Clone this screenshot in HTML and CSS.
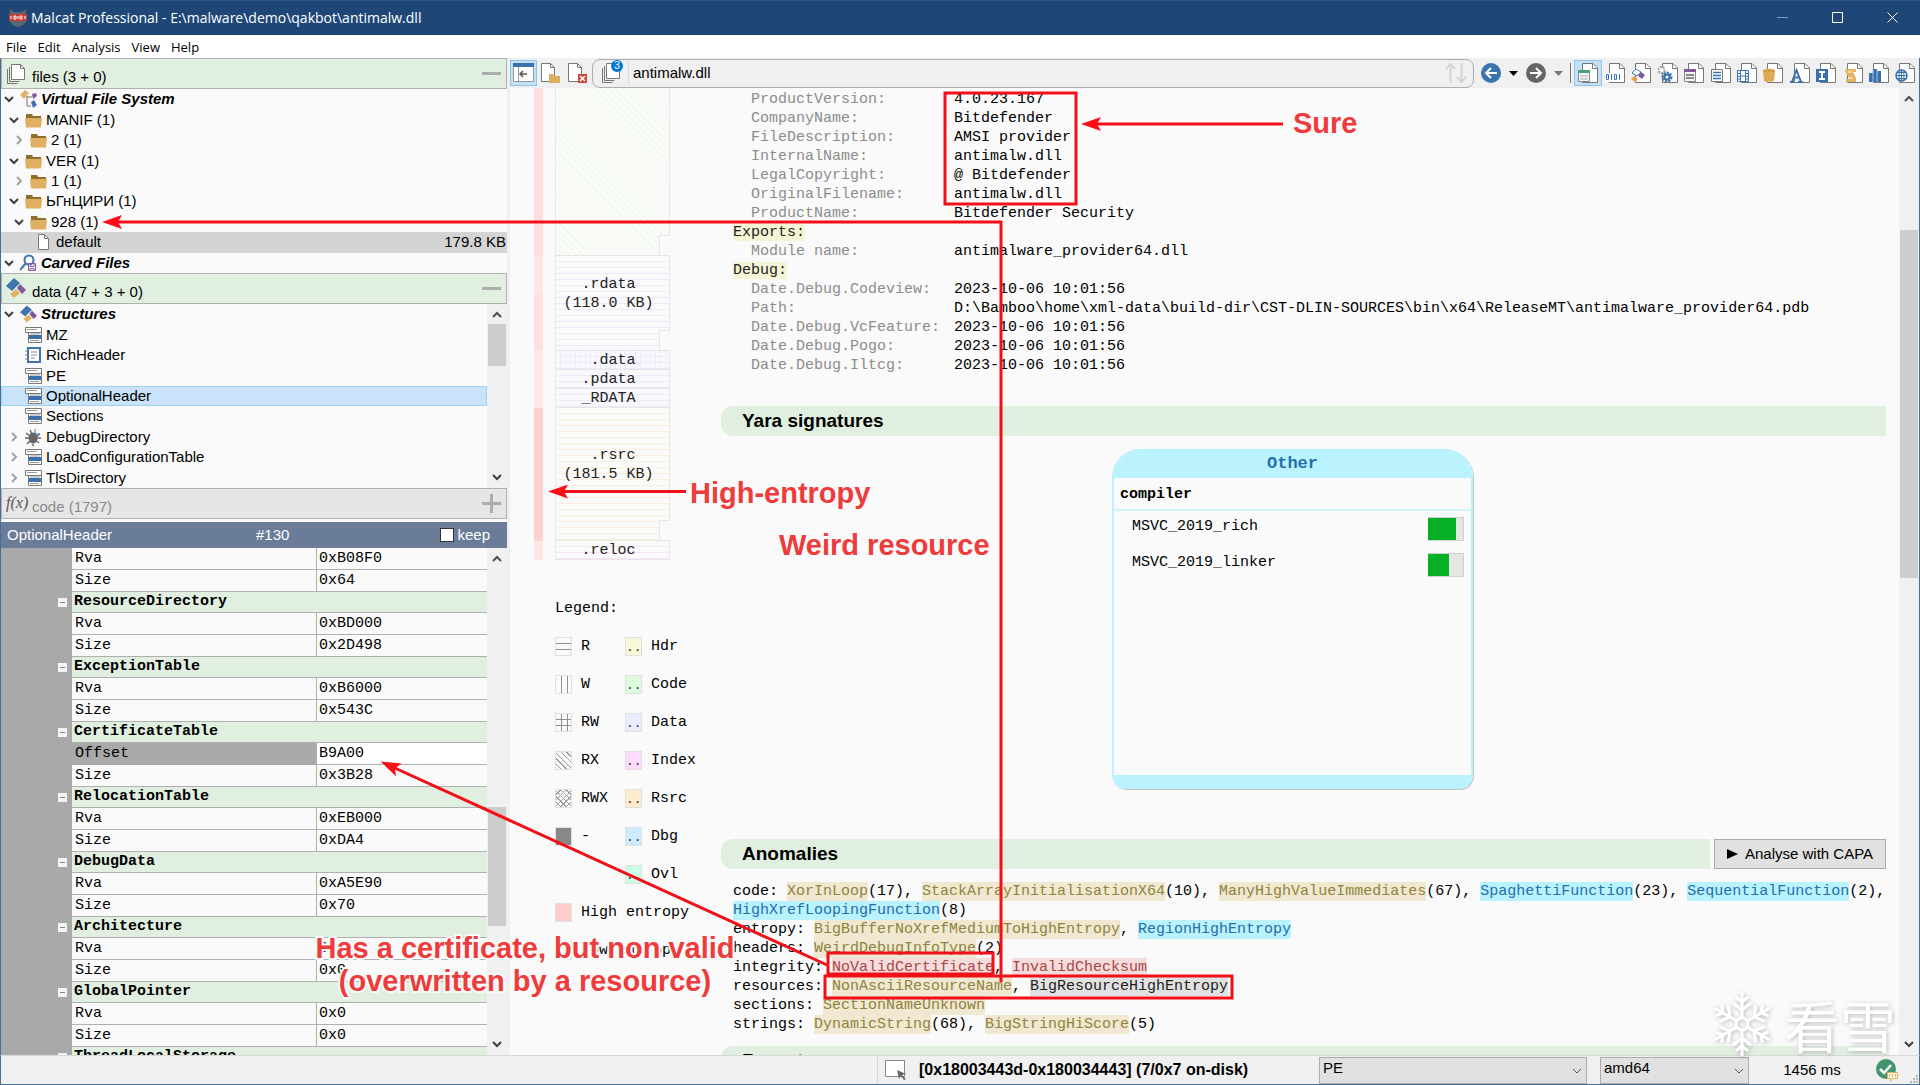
FILE: index.html
```html
<!DOCTYPE html>
<html lang="en">
<head>
  <meta charset="utf-8">
  <title>Malcat Professional - E:\malware\demo\qakbot\antimalw.dll</title>
  <link rel="stylesheet" href="styles.css">
</head>
<body>
  <!-- Shared icons -->
  <svg class="defs" aria-hidden="true">
    <symbol id="chev-down" viewBox="0 0 10 10"><path d="M1 3l4 4 4-4" fill="none" stroke="#404040" stroke-width="2"/></symbol>
    <symbol id="chev-right" viewBox="0 0 10 10"><path d="M3 1l4 4-4 4" fill="none" stroke="#a0a0a0" stroke-width="2"/></symbol>
    <symbol id="arrow-up" viewBox="0 0 10 10"><path d="M1 7l4-4 4 4" fill="none" stroke="#505050" stroke-width="2"/></symbol>
    <symbol id="folder" viewBox="0 0 17 16"><path d="M1 7V2h6l1 2h8v3z" fill="#8d6f2d"/><path d="M0 6h17l-1 9.500H1z" fill="#e0b062"/></symbol>
    <symbol id="page" viewBox="0 0 17 18"><path d="M3.500 1.500h6l4 4v11h-10z" fill="#fff" stroke="#777"/><path d="M9.500 1.500v4h4" fill="none" stroke="#777"/></symbol>
    <symbol id="pages" viewBox="0 0 20 22"><path d="M1.500 6v14.500h10M3.500 4v14.500h10" fill="none" stroke="#777"/><path d="M5.500 1.500h9l4 4v11h-13z" fill="#fff" stroke="#777"/><path d="M14.500 1.500v4h4" fill="none" stroke="#777"/></symbol>
    <symbol id="struct" viewBox="0 0 17 18"><path d="M.5 1.500h16v5H.5zM3.500 6.500h13v10h-13z" fill="#fff" stroke="#777"/><path d="M2 3.500h10M5 8h10M5 14.500h9" stroke="#999"/><path d="M4 9h12v4H4z" fill="#3a70ad"/></symbol>
    <symbol id="bricks" viewBox="0 0 20 20"><path d="M8 0l6 5-8 8-6-5z" fill="#3f74ae"/><path d="M14 6l6 6-4 4-5-6z" fill="#81589b"/><path d="M10 11l4 4-6 5-4-4z" fill="#e3b363"/></symbol>
    <symbol id="doc" viewBox="0 0 21 22"><path d="M4.500 1.500h10.500l4.500 4.500v14.500h-15z" fill="#fff" stroke="#777"/><path d="M14.500 1.500v5h5" fill="none" stroke="#777"/></symbol>
  </svg>

  <header class="titlebar">
    <svg class="logo" viewBox="0 0 18 18"><path d="M1 0l4 3h8l4-3v11c0 4-4 6-8 7-4-1-8-3-8-7z" fill="#5a6670"/><path d="M0 5h18v7H0z" fill="#c93a3a"/><path d="M2 7v3M5 7h2v3H5zM9 7v3M11 7h2v3h-2zM16 7v3" stroke="#fff" fill="none"/></svg>
    <h1>Malcat Professional - E:\malware\demo\qakbot\antimalw.dll</h1>
    <button aria-label="Minimize"><svg viewBox="0 0 11 11"><path d="M0 5.500h11" stroke="#7f9dbd"/></svg></button>
    <button aria-label="Maximize"><svg viewBox="0 0 11 11"><path d="M.5.5h10v10H.5z" stroke="#fff" fill="none"/></svg></button>
    <button aria-label="Close"><svg viewBox="0 0 11 11"><path d="M.5.5l10 10M10.500.5l-10 10" stroke="#fff"/></svg></button>
  </header>

  <nav class="menubar">
    <button>File</button><button>Edit</button><button>Analysis</button><button>View</button><button>Help</button>
  </nav>

  <div class="workspace">
    <aside class="sidebar">
      <h2 class="panel-title"><svg width="20" height="22"><use href="#pages"/></svg><span>files (3 + 0)</span><i class="collapse"></i></h2>
      <ul class="tree">
        <li class="root"><svg class="chev"><use href="#chev-down"/></svg><svg class="icon" viewBox="0 0 17 18"><path d="M5 0l4 3-5 6-4-4z" fill="#e3b363"/><path d="M7 6v10h4M7 7h5" stroke="#777" fill="none"/><path d="M12 4l4-1 1 3-4 3z" fill="#81589b"/><path d="M11 12l3-2 3 5-4 3z" fill="#3f74ae"/></svg>Virtual File System</li>
        <li class="l1"><svg class="chev"><use href="#chev-down"/></svg><svg class="icon"><use href="#folder"/></svg>MANIF (1)</li>
        <li class="l2"><svg class="chev"><use href="#chev-right"/></svg><svg class="icon"><use href="#folder"/></svg>2 (1)</li>
        <li class="l1"><svg class="chev"><use href="#chev-down"/></svg><svg class="icon"><use href="#folder"/></svg>VER (1)</li>
        <li class="l2"><svg class="chev"><use href="#chev-right"/></svg><svg class="icon"><use href="#folder"/></svg>1 (1)</li>
        <li class="l1"><svg class="chev"><use href="#chev-down"/></svg><svg class="icon"><use href="#folder"/></svg>ЬГнЦИРИ (1)</li>
        <li class="l2"><svg class="chev"><use href="#chev-down"/></svg><svg class="icon"><use href="#folder"/></svg>928 (1)</li>
        <li class="l3 current"><i class="chev"></i><svg class="icon"><use href="#page"/></svg>default<span class="size">179.8 KB</span></li>
        <li class="root"><svg class="chev"><use href="#chev-down"/></svg><svg class="icon" viewBox="0 0 17 18"><circle cx="9" cy="6" r="4.500" fill="#fff" stroke="#3f74ae" stroke-width="2"/><path d="M6 9l-6 7" stroke="#3f74ae" stroke-width="2"/><path d="M8.500 9.500h7v7h-7zM10 9.500v3h4v-3M10 16.500v-2h4v2" fill="#fff" stroke="#81589b"/></svg>Carved Files</li>
      </ul>

      <h2 class="panel-title"><svg width="20" height="20"><use href="#bricks"/></svg><span>data (47 + 3 + 0)</span><i class="collapse"></i></h2>
      <div class="scroll-area">
        <ul class="tree">
          <li class="root"><svg class="chev"><use href="#chev-down"/></svg><svg class="icon"><use href="#bricks"/></svg>Structures</li>
          <li class="l1"><i class="chev"></i><svg class="icon"><use href="#struct"/></svg>MZ</li>
          <li class="l1"><i class="chev"></i><svg class="icon" viewBox="0 0 17 18"><path d="M3 2h12v14H3z" fill="#fff" stroke="#3f74ae" stroke-width="2"/><path d="M6 6h6M6 9h6M6 12h4M0 5h3M0 9h3M0 13h3" stroke="#888"/></svg>RichHeader</li>
          <li class="l1"><i class="chev"></i><svg class="icon"><use href="#struct"/></svg>PE</li>
          <li class="l1 selected"><i class="chev"></i><svg class="icon"><use href="#struct"/></svg>OptionalHeader</li>
          <li class="l1"><i class="chev"></i><svg class="icon"><use href="#struct"/></svg>Sections</li>
          <li class="l1"><svg class="chev"><use href="#chev-right"/></svg><svg class="icon" viewBox="0 0 17 18"><ellipse cx="8" cy="10" rx="4.500" ry="5.500" fill="#666"/><path d="M1 5l4 3M0 10h16M2 16l4-4M14 15l-4-3M8 16v2M15 6l-4 3M5 2l2 4" stroke="#666" stroke-width="1.500"/><path d="M10 1v5h5" stroke="#3f74ae" fill="none"/></svg>DebugDirectory</li>
          <li class="l1"><svg class="chev"><use href="#chev-right"/></svg><svg class="icon"><use href="#struct"/></svg>LoadConfigurationTable</li>
          <li class="l1"><svg class="chev"><use href="#chev-right"/></svg><svg class="icon"><use href="#struct"/></svg>TlsDirectory</li>
        </ul>
        <div class="scrollbar data-scroll"><svg><use href="#arrow-up"/></svg><i class="thumb"></i><svg><use href="#chev-down"/></svg></div>
      </div>

      <h2 class="panel-title off"><em>f(x)</em><span>code (1797)</span><i class="collapse plus"></i></h2>

      <div class="prop-title">
        <span class="prop-name">OptionalHeader</span><span class="prop-id">#130</span>
        <label><input type="checkbox">keep</label>
      </div>
      <div class="scroll-area props">
        <div class="prop-view">
          <table>
            <tr><td class="gutter"></td><td>Rva</td><td>0xB08F0</td></tr>
            <tr><td class="gutter"></td><td>Size</td><td>0x64</td></tr>
            <tr class="group"><td class="gutter"><i></i></td><th colspan="2">ResourceDirectory</th></tr>
            <tr><td class="gutter"></td><td>Rva</td><td>0xBD000</td></tr>
            <tr><td class="gutter"></td><td>Size</td><td>0x2D498</td></tr>
            <tr class="group"><td class="gutter"><i></i></td><th colspan="2">ExceptionTable</th></tr>
            <tr><td class="gutter"></td><td>Rva</td><td>0xB6000</td></tr>
            <tr><td class="gutter"></td><td>Size</td><td>0x543C</td></tr>
            <tr class="group"><td class="gutter"><i></i></td><th colspan="2">CertificateTable</th></tr>
            <tr class="active"><td class="gutter"></td><td>Offset</td><td>B9A00</td></tr>
            <tr><td class="gutter"></td><td>Size</td><td>0x3B28</td></tr>
            <tr class="group"><td class="gutter"><i></i></td><th colspan="2">RelocationTable</th></tr>
            <tr><td class="gutter"></td><td>Rva</td><td>0xEB000</td></tr>
            <tr><td class="gutter"></td><td>Size</td><td>0xDA4</td></tr>
            <tr class="group"><td class="gutter"><i></i></td><th colspan="2">DebugData</th></tr>
            <tr><td class="gutter"></td><td>Rva</td><td>0xA5E90</td></tr>
            <tr><td class="gutter"></td><td>Size</td><td>0x70</td></tr>
            <tr class="group"><td class="gutter"><i></i></td><th colspan="2">Architecture</th></tr>
            <tr><td class="gutter"></td><td>Rva</td><td>0x0</td></tr>
            <tr><td class="gutter"></td><td>Size</td><td>0x0</td></tr>
            <tr class="group"><td class="gutter"><i></i></td><th colspan="2">GlobalPointer</th></tr>
            <tr><td class="gutter"></td><td>Rva</td><td>0x0</td></tr>
            <tr><td class="gutter"></td><td>Size</td><td>0x0</td></tr>
            <tr class="group"><td class="gutter"><i></i></td><th colspan="2">ThreadLocalStorage</th></tr>
          </table>
        </div>
        <div class="scrollbar prop-scroll"><svg><use href="#arrow-up"/></svg><i class="thumb"></i><svg><use href="#chev-down"/></svg></div>
      </div>
    </aside>

    <main>
      <div class="toolbar">
        <button class="on" aria-label="Toggle side panel"><svg viewBox="0 0 21 22"><path d="M.5 1.500h20v18H.5z" fill="#fff" stroke="#999"/><path d="M0 1h21v4H0z" fill="#3a70ad"/><path d="M5.500 5v14" stroke="#999"/><path d="M14 12H7m3-3l-3 3 3 3" fill="none" stroke="#555" stroke-width="1.500"/></svg></button>
        <button aria-label="Open file"><svg viewBox="0 0 21 22"><path d="M1.500 1.500h9l4 4v14h-13z" fill="#fff" stroke="#777"/><path d="M10.500 1.500v4h4" fill="none" stroke="#777"/><path d="M9 12h4l1 2h6v7H9z" fill="#dcb05f"/></svg></button>
        <button aria-label="Close file"><svg viewBox="0 0 21 22"><path d="M1.500 1.500h9l4 4v14h-13z" fill="#fff" stroke="#777"/><path d="M10.500 1.500v4h4" fill="none" stroke="#777"/><path d="M11 12h9v9h-9z" fill="#c94a35"/><path d="M13 14l5 5m0-5l-5 5" stroke="#fff" stroke-width="1.500"/></svg></button>
        <div class="address">
          <span class="stack"><svg width="20" height="22"><use href="#pages"/></svg><b>3</b></span>
          <input aria-label="Current file" value="antimalw.dll">
          <svg width="24" height="22" viewBox="0 0 24 22"><path d="M6.500 21V2M2 7l4.500-5L11 7M17.500 1v19M13 15l4.500 5 4.500-5" fill="none" stroke="#d4d4d4" stroke-width="2"/></svg>
        </div>
        <div class="history">
          <button aria-label="Back"><svg viewBox="0 0 20 20"><circle cx="10" cy="10" r="10" fill="#3a74b0"/><path d="M16 10H5m5-5l-5 5 5 5" fill="none" stroke="#fff" stroke-width="2"/></svg></button>
          <svg width="9" height="5"><path d="M0 0h9L4.500 5z"/></svg>
          <button aria-label="Forward"><svg viewBox="0 0 20 20"><circle cx="10" cy="10" r="10" fill="#666"/><path d="M4 10h11m-5-5l5 5-5 5" fill="none" stroke="#fff" stroke-width="2"/></svg></button>
          <svg width="9" height="5"><path d="M0 0h9L4.500 5z" fill="#777"/></svg>
        </div>
        <div class="views">
          <button class="on" aria-label="Summary"><svg viewBox="0 0 21 22"><use href="#doc"/><path d="M.5 8.500h11v11H.5z" fill="#f4f4f4" stroke="#888"/><path d="M0 8h12v3H0z" fill="#4f9c76"/><path d="M2 14h8M2 17h8" stroke="#aaa"/></svg></button>
          <button aria-label="Hexadecimal"><svg viewBox="0 0 21 22"><use href="#doc"/><path d="M0 11h16v9H0z" fill="#fff"/><path d="M1.500 12.500h2v5h-2zM6.500 12v6M9.500 12.500h2v5h-2zM14.500 12v6" fill="none" stroke="#3a74b0"/></svg></button>
          <button aria-label="Structures"><svg viewBox="0 0 21 22"><use href="#doc"/><path d="M5 7l5 3-4 4-5-3z" fill="#fff" stroke="#3f74ae"/><path d="M10 10l4 3-3 4-4-3z" fill="#81589b"/><path d="M3 14l4 3-3 3-4-3z" fill="#e3a053"/></svg></button>
          <button aria-label="Code"><svg viewBox="0 0 21 22"><use href="#doc"/><circle cx="3.500" cy="8" r="3" fill="#fff" stroke="#999" stroke-width="2" stroke-dasharray="2 1"/><circle cx="9" cy="15" r="4" fill="#fff" stroke="#3a74b0" stroke-width="3" stroke-dasharray="2 1"/><circle cx="9" cy="15" r="2.500" fill="none" stroke="#3a74b0" stroke-width="2"/></svg></button>
          <button aria-label="Functions"><svg viewBox="0 0 21 22"><use href="#doc"/><path d="M.5 8.500h11v11H.5z" fill="#f4f4f4" stroke="#888"/><path d="M0 7h12v3H0z" fill="#81589b"/><path d="M2 13h8M2 16h8" stroke="#888" stroke-width="2"/></svg></button>
          <button aria-label="Symbols"><svg viewBox="0 0 21 22"><use href="#doc"/><path d="M.5 7.500h11v12H.5z" fill="#fff" stroke="#777"/><path d="M2 10.500h8M2 13.500h8M2 16.500h8" stroke="#3a74b0" stroke-width="1.500"/></svg></button>
          <button aria-label="Overlay"><svg viewBox="0 0 21 22"><use href="#doc"/><path d="M.5 8.500h11v11H.5zM3.500 8v12M8.500 8v12M3 14h6M1 11.500h2M1 14.500h2M1 17h2M9 11.500h2M9 14.500h2M9 17h2" fill="#fff" stroke="#3a74b0"/></svg></button>
          <button aria-label="Database"><svg viewBox="0 0 21 22"><use href="#doc"/><path d="M0 9c0-3 12-3 12 0l-1 10c-1 1-9 1-10 0z" fill="#deaa55"/><path d="M0 9h12" stroke="#c6913d"/></svg></button>
          <button aria-label="Strings"><svg viewBox="0 0 21 22"><use href="#doc"/><path d="M0 20h4M8 20h5M2 20L6.500 8 11 20M4 15.500h5" fill="none" stroke="#3a70ad" stroke-width="2"/></svg></button>
          <button aria-label="Imports"><svg viewBox="0 0 21 22"><use href="#doc"/><path d="M0 7h12v13H0z" fill="#3a70ad"/><path d="M3 10h6M6 10v7M3 17h6" stroke="#fff" stroke-width="2"/></svg></button>
          <button aria-label="Scripts"><svg viewBox="0 0 21 22"><use href="#doc"/><path d="M2 7h11v3h-3l3 6v4H3v-3h4L3 11z" fill="#e3b363"/><path d="M5 10h4M7 16h3" stroke="#fff"/></svg></button>
          <button aria-label="Library"><svg viewBox="0 0 21 22"><use href="#doc"/><path d="M0 11h4v9H0zM4 7h4v13H4zM8 9h4v11H8z" fill="#3a70ad"/><path d="M4 8v12M8 9v11" stroke="#a9c3df"/></svg></button>
          <button aria-label="Online"><svg viewBox="0 0 21 22"><use href="#doc"/><circle cx="6.500" cy="13.500" r="5.500" fill="#fff" stroke="#3a70ad" stroke-width="1.500"/><path d="M1 13.500h11M6.500 8v11M2 10.500h9M2 16.500h9" stroke="#3a70ad"/><ellipse cx="6.500" cy="13.500" rx="2.500" ry="5.500" fill="none" stroke="#3a70ad"/></svg></button>
        </div>
      </div>

      <div class="pane">
        <div class="memory">
          <div class="map">
            <div class="entropy"></div>
            <div class="sections">
              <div class="sec code notch"></div>
              <div class="sec rdata notch">.rdata<br>(118.0 KB)</div>
              <div class="sec data">&nbsp;.data</div>
              <div class="sec ro">.pdata</div>
              <div class="sec ro">_RDATA</div>
              <div class="sec rsrc notch">&nbsp;.rsrc<br>(181.5 KB)</div>
              <div class="sec reloc">.reloc</div>
            </div>
          </div>
          <div class="legend">
            <h3>Legend:</h3>
            <i class="sw r"></i><span>R</span><i class="sw hdr">..</i><span>Hdr</span>
            <i class="sw w"></i><span>W</span><i class="sw cod">..</i><span>Code</span>
            <i class="sw rw"></i><span>RW</span><i class="sw dat">..</i><span>Data</span>
            <i class="sw rx"></i><span>RX</span><i class="sw idx">..</i><span>Index</span>
            <i class="sw rwx"></i><span>RWX</span><i class="sw rsc">..</i><span>Rsrc</span>
            <i class="sw none"></i><span>-</span><i class="sw dbg">..</i><span>Dbg</span>
            <i></i><span></span><i class="sw ovl">..</i><span>Ovl</span>
            <i class="sw high"></i><span class="wide">High entropy</span>
            <i class="sw low"></i><span class="wide">Low entropy</span>
          </div>
        </div>

        <div class="report">
          <dl class="info">
            <dt>ProductVersion:</dt><dd>4.0.23.167</dd>
            <dt>CompanyName:</dt><dd>Bitdefender</dd>
            <dt>FileDescription:</dt><dd>AMSI provider</dd>
            <dt>InternalName:</dt><dd>antimalw.dll</dd>
            <dt>LegalCopyright:</dt><dd>@ Bitdefender</dd>
            <dt>OriginalFilename:</dt><dd>antimalw.dll</dd>
            <dt>ProductName:</dt><dd>Bitdefender Security</dd>
            <dt class="cat"><mark>Exports:</mark></dt>
            <dt>Module name:</dt><dd>antimalware_provider64.dll</dd>
            <dt class="cat"><mark>Debug:</mark></dt>
            <dt>Date.Debug.Codeview:</dt><dd>2023-10-06 10:01:56</dd>
            <dt>Path:</dt><dd>D:\Bamboo\home\xml-data\build-dir\CST-DLIN-SOURCES\bin\x64\ReleaseMT\antimalware_provider64.pdb</dd>
            <dt>Date.Debug.VcFeature:</dt><dd>2023-10-06 10:01:56</dd>
            <dt>Date.Debug.Pogo:</dt><dd>2023-10-06 10:01:56</dd>
            <dt>Date.Debug.Iltcg:</dt><dd>2023-10-06 10:01:56</dd>
          </dl>

          <div class="heading yara"><h2>Yara signatures</h2></div>
          <section class="card">
            <h3>Other</h3>
            <h4>compiler</h4>
            <ul>
              <li>MSVC_2019_rich<span class="level"><i style="width: 80%"></i></span></li>
              <li>MSVC_2019_linker<span class="level"><i style="width: 60%"></i></span></li>
            </ul>
          </section>

          <div class="heading"><h2>Anomalies</h2><button class="capa"><svg width="11" height="10"><path d="M0 0l11 5-11 5z"/></svg>Analyse with CAPA</button></div>
          <ul class="anomalies">
            <li>code: <a href="#" class="mid">XorInLoop</a>(17), <a href="#" class="mid">StackArrayInitialisationX64</a>(10), <a href="#" class="mid">ManyHighValueImmediates</a>(67), <a href="#" class="note">SpaghettiFunction</a>(23), <a href="#" class="note">SequentialFunction</a>(2),<br><a href="#" class="note">HighXrefLoopingFunction</a>(8)</li>
            <li>entropy: <a href="#" class="mid">BigBufferNoXrefMediumToHighEntropy</a>, <a href="#" class="note">RegionHighEntropy</a></li>
            <li>headers: <a href="#" class="mid">WeirdDebugInfoType</a>(2)</li>
            <li>integrity: <a href="#" class="bad">NoValidCertificate</a>, <a href="#" class="bad">InvalidChecksum</a></li>
            <li>resources: <a href="#" class="mid">NonAsciiResourceName</a>, <a href="#" class="plain">BigResourceHighEntropy</a></li>
            <li>sections: <a href="#" class="mid">SectionNameUnknown</a></li>
            <li>strings: <a href="#" class="mid">DynamicString</a>(68), <a href="#" class="mid">BigStringHiScore</a>(5)</li>
          </ul>
          <div class="heading next"><h2>Report</h2></div>
        </div>
        <div class="scrollbar main-scroll"><svg><use href="#arrow-up"/></svg><i class="thumb"></i><svg><use href="#chev-down"/></svg></div>
      </div>
    </main>
  </div>

  <footer class="status">
    <div class="selection">
      <svg width="24" height="22" viewBox="0 0 24 22"><path d="M1.500 1.500h19v16h-19z" fill="#fff" stroke="#888"/><path d="M13 11l9 4-4 1 4 4-2 1-3-4-2 3z" fill="#666"/></svg>
      [0x18003443d-0x180034443] (7/0x7 on-disk)
    </div>
    <span class="select type"><select aria-label="File type"><option>PE</option></select><svg width="8" height="6"><path d="M0 1l4 4 4-4" fill="none" stroke="#555"/></svg></span>
    <span class="select cpu"><select aria-label="Architecture"><option>amd64</option></select><svg width="8" height="6"><path d="M0 1l4 4 4-4" fill="none" stroke="#555"/></svg></span>
    <span class="time">1456 ms</span>
    <svg class="ready" width="24" height="24" viewBox="0 0 24 24"><circle cx="11" cy="11" r="10" fill="#43956f"/><path d="M5 11l4 4 7-8" fill="none" stroke="#fff" stroke-width="2.500"/><path d="M12.500 14.500h10v6h-5l-2 3v-3h-3z" fill="#fdf3e0" stroke="#e3b363"/><path d="M14 17.500h1m2 0h1m2 0h1" stroke="#d29a3d" stroke-width="2"/></svg>
    <svg class="grip" width="10" height="10"><path d="M7 1h2v2H7zM4 4h2v2H4zM7 4h2v2H7zM1 7h2v2H1zM4 7h2v2H4zM7 7h2v2H7z" fill="#b8b8b8"/></svg>
  </footer>

  <div class="watermark" aria-hidden="true">
    <svg width="66" height="66" viewBox="-33 -33 66 66">
      <g fill="none" stroke="#fff" stroke-width="3">
        <path id="arm" d="M0-7v-25M0-14l-9-7M0-14l9-7M0-22l-6-5M0-22l6-5"/>
        <use href="#arm" transform="rotate(60)"/><use href="#arm" transform="rotate(120)"/><use href="#arm" transform="rotate(180)"/><use href="#arm" transform="rotate(240)"/><use href="#arm" transform="rotate(300)"/>
        <circle r="6"/>
      </g>
    </svg>
    <span>看雪</span>
  </div>

  <!-- Red callouts drawn over the window -->
  <svg class="callouts" width="1920" height="1085" viewBox="0 0 1920 1085">
    <defs>
      <marker id="head" markerUnits="userSpaceOnUse" markerWidth="20" markerHeight="14" refX="14" refY="7" orient="auto"><path d="M20 7L0 0l4 7-4 7z" fill="#ff0c18"/></marker>
    </defs>
    <g class="lines">
      <rect x="945" y="93" width="131" height="111"/>
      <rect x="828" y="953" width="165" height="21"/>
      <rect x="825" y="976" width="407" height="22"/>
      <path d="M1283 124H1087" marker-end="url(#head)"/>
      <path d="M686 491.500H554" marker-end="url(#head)"/>
      <path d="M1001 982V222H108" marker-end="url(#head)"/>
      <path d="M827 965L386 764" marker-end="url(#head)"/>
    </g>
    <g class="notes">
      <text x="1293" y="133">Sure</text>
      <text x="690" y="503">High-entropy</text>
      <text x="779" y="555">Weird resource</text>
      <text x="525" y="958" text-anchor="middle">Has a certificate, but non valid</text>
      <text x="525" y="991" text-anchor="middle">(overwritten by a resource)</text>
    </g>
  </svg>
</body>
</html>
```
FILE: styles.css
```css
* {
  box-sizing: border-box;
}

body {
  margin: 0;
  height: 100vh;
  display: flex;
  flex-direction: column;
  overflow: hidden;
  background: #f0f0f0;
  color: #000;
  font: 15px/20px "Liberation Sans", Arial, sans-serif;
}

h1, h2, h3, h4, ul, dl, dd {
  margin: 0;
  padding: 0;
  font-size: inherit;
  font-weight: normal;
}

ul {
  list-style: none;
}

i, em {
  font-style: normal;
}

button {
  border: 0;
  padding: 0;
  background: none;
  color: inherit;
  font: inherit;
}

a {
  text-decoration: none;
}

.defs {
  position: absolute;
  width: 0;
  height: 0;
}

/* Title and menu */
.titlebar {
  height: 35px;
  flex: none;
  display: flex;
  align-items: center;
  padding-left: 9px;
  background: #1e4778;
  border-top: 1px solid #2a5a80;
  color: #fff;
}

.titlebar h1 {
  flex: 1;
  margin-left: 4px;
  font: 14px/20px "Open Sans", "Noto Sans", sans-serif;
}

.titlebar button {
  width: 55px;
  height: 34px;
}

.titlebar button svg {
  width: 11px;
  height: 11px;
}

.logo {
  width: 18px;
  height: 18px;
}

.menubar {
  height: 23px;
  flex: none;
  display: flex;
  gap: 11px;
  padding-left: 6px;
  background: #fff;
  font: 13px/24px "Open Sans", "Noto Sans", sans-serif;
}

.workspace {
  flex: 1;
  min-height: 0;
  display: flex;
  border-left: 1px solid #4a6e9a;
  border-right: 1px solid #4a6e9a;
}

/* Left side */
.sidebar {
  width: 506px;
  flex: none;
  display: flex;
  flex-direction: column;
  background: #fafafa;
}

.panel-title {
  flex: none;
  display: flex;
  height: 31px;
  padding: 4px 5px 0 4px;
  border: 1px solid #b0b0b0;
  background: #e1efe1;
}

.panel-title span {
  flex: 1;
  padding: 4px 0 0 6px;
}

.panel-title.off {
  background: #e6e6e6;
  color: #8a8a8a;
}

.panel-title em {
  width: 20px;
  font: italic 16px/20px "Liberation Serif", serif;
  white-space: nowrap;
  color: #555;
}

.collapse {
  width: 19px;
  height: 3px;
  margin-top: 9px;
  background: #adadad;
}

.plus {
  height: 19px;
  margin-top: 1px;
  background: linear-gradient(#adadad, #adadad) center / 19px 3px no-repeat, linear-gradient(#adadad, #adadad) center / 3px 19px no-repeat;
}

.tree {
  flex: 1;
  height: 184px;
  display: grid;
  grid-auto-rows: 1fr;
}

.sidebar > .tree {
  flex: none;
}

.tree li {
  min-height: 0;
  display: flex;
  align-items: center;
  padding-left: 3px;
}

.tree .chev {
  width: 10px;
  height: 10px;
  margin-right: 6px;
}

.tree .icon {
  width: 17px;
  height: 18px;
  margin-right: 4px;
}

.tree .root {
  font-weight: bold;
  font-style: italic;
}

.tree .l1 {
  padding-left: 8px;
}

.tree .l2 {
  padding-left: 13px;
}

.tree .l3 {
  padding-left: 18px;
}

.tree .current {
  background: #d4d4d4;
}

.tree .selected {
  background: #c9e4fa;
  box-shadow: inset 0 0 0 1px #9fd0f2;
}

.size {
  margin-left: auto;
  padding-right: 1px;
}

.scroll-area {
  display: flex;
  flex: none;
}

.scrollbar {
  width: 20px;
  flex: none;
  display: flex;
  flex-direction: column;
  align-items: center;
  padding: 6px 0;
  background: #f0f0f0;
}

.scrollbar svg {
  width: 10px;
  height: 10px;
}

.thumb {
  width: 18px;
  background: #cdcdcd;
}

.scrollbar svg:last-child {
  margin-top: auto;
}

.data-scroll .thumb {
  height: 42px;
  margin-top: 4px;
}

.prop-scroll .thumb {
  height: 119px;
  margin-top: 243px;
}

.main-scroll .thumb {
  height: 348px;
  margin-top: 126px;
}

.prop-title {
  flex: none;
  height: 26px;
  margin-top: 3px;
  padding: 0 17px 1px 6px;
  display: flex;
  align-items: center;
  background: #6b7c99;
  color: #fff;
}

.prop-name {
  width: 249px;
}

.prop-title label {
  margin-left: auto;
  display: flex;
  align-items: center;
  gap: 3px;
}

.prop-title input {
  width: 14px;
  height: 14px;
  margin: 0;
  appearance: none;
  background: #fff;
  border: 1px solid #333;
}

.props {
  flex: 1;
  min-height: 0;
}

.prop-view {
  flex: 1;
  overflow: hidden;
}

.prop-view table {
  width: 100%;
  table-layout: fixed;
  border-collapse: separate;
  border-spacing: 0;
  font: 15px/20px "Liberation Mono", monospace;
}

.prop-view td,
.prop-view th {
  height: 22px;
  padding: 0 0 0 3px;
  text-align: left;
  border-bottom: 1px solid #b0b0b0;
}

.prop-view td:nth-child(2) {
  width: 244px;
}

.prop-view td:nth-child(3) {
  padding-left: 2px;
  border-left: 1px solid #b0b0b0;
}

.prop-view .group th {
  height: 21px;
  padding-left: 2px;
  background: #e1efe1;
}

.prop-view .gutter {
  width: 71px;
  padding: 0;
  background: #a9a9a9;
  border: 0;
}

.prop-view .group .gutter {
  height: 21px;
}

.gutter i {
  display: block;
  width: 9px;
  height: 9px;
  margin-left: 57px;
  background: linear-gradient(#7785a5, #7785a5) center / 5px 1px no-repeat #f4f4f4;
}

.active td:nth-child(2) {
  background: #a9a9a9;
  border-bottom-color: #a9a9a9;
}

.active td:nth-child(3) {
  background: #fff;
}

/* Toolbar */
main {
  flex: 1;
  min-width: 0;
  margin-left: 3px;
  display: flex;
  flex-direction: column;
}

.toolbar {
  height: 30px;
  flex: none;
  display: flex;
  align-items: center;
}

.toolbar button {
  width: 27px;
  height: 26px;
  display: flex;
  align-items: center;
  justify-content: center;
}

.toolbar button svg {
  width: 21px;
  height: 22px;
}

.toolbar .on {
  background: #c4e0f6;
  border: 1px solid #90c4ec;
}

.address {
  flex: 1;
  min-width: 0;
  height: 29px;
  margin-left: 1px;
  padding: 0 5px 0 8px;
  display: flex;
  align-items: center;
  border: 1px solid #adadad;
  border-radius: 8px;
}

.address input {
  flex: 1;
  min-width: 0;
  padding: 0;
  border: 0;
  background: none;
  font: inherit;
}

.stack {
  position: relative;
  display: flex;
  width: 28px;
  margin-right: 4px;
  border-right: 1px solid #d8d8d8;
}

.stack b {
  position: absolute;
  left: 10px;
  top: -2px;
  width: 12px;
  height: 12px;
  border-radius: 6px;
  background: #0078d7;
  color: #fff;
  font: 10px/12px "Liberation Sans", sans-serif;
  text-align: center;
}

.history {
  display: flex;
  align-items: center;
  gap: 8px;
  margin: 0 3px 0 7px;
  padding-right: 7px;
  border-right: 1px solid #777;
}

.history button,
.history button svg {
  width: 20px;
  height: 20px;
}

.views {
  width: 345px;
  display: flex;
}

.views button {
  flex: 1;
}

/* Report pane */
.pane {
  flex: 1;
  min-height: 0;
  display: flex;
  overflow: hidden;
  padding-left: 24px;
  background: #fafafa;
  font: 15px/19px "Liberation Mono", monospace;
}

.memory {
  width: 187px;
  flex: none;
}

.map {
  display: flex;
  gap: 12px;
}

.entropy {
  width: 9px;
  background: linear-gradient(#ffdcdc 168px, #ffe6e6 168px 206px, #ffe0e0 206px 262px, #ffe9e9 262px 320px, #ffd0d0 320px 453px, #ffe6e6 453px);
}

.sections {
  width: 115px;
}

.sec {
  position: relative;
  height: 19px;
  padding-right: 8px;
  border: 1px solid #e6e6e6;
  border-top: 0;
  text-align: center;
  line-height: 19px;
  color: #222;
}

.notch::after {
  content: "";
  position: absolute;
  right: -1px;
  bottom: -1px;
  width: 10px;
  height: 19px;
  background: #fafafa;
  border: solid #e6e6e6;
  border-width: 1px 0 1px 1px;
}

.code {
  height: 168px;
  background: repeating-linear-gradient(45deg, #f8fbf7 0 4px, #f1f7ef 4px 5px);
}

.rdata {
  height: 95px;
  padding-top: 19px;
  background: repeating-linear-gradient(#fafafa 0 5px, #ebebfb 5px 6px);
}

.data {
  background: repeating-linear-gradient(90deg, transparent 0 4px, #ebebfb 4px 5px), repeating-linear-gradient(#f8f8fd 0 5px, #ebebfb 5px 6px);
}

.ro {
  background: repeating-linear-gradient(#f8f8fd 0 5px, #ebebfb 5px 6px);
}

.rsrc {
  height: 133px;
  padding-top: 38px;
  background: repeating-linear-gradient(#fafafa 0 5px, #fbeedb 5px 6px);
}

.reloc {
  background: repeating-linear-gradient(#fafafa 0 5px, #f9e4f7 5px 6px);
}

.legend {
  display: grid;
  grid-template-columns: 17px 35px 17px 1fr;
  gap: 19px 9px;
  padding: 39px 0 0 21px;
}

.legend h3 {
  grid-column: 1 / 5;
}

.legend .wide {
  grid-column: 2 / 5;
}

.sw {
  height: 19px;
  border: 1px solid #e0e0e0;
  text-align: center;
  color: #333;
  font-size: 13px;
}

.r {
  background: repeating-linear-gradient(#fafafa 0 5px, #909090 5px 6px);
}

.w {
  background: repeating-linear-gradient(90deg, #fafafa 0 5px, #909090 5px 6px);
}

.rw {
  background: repeating-linear-gradient(90deg, transparent 0 5px, #909090 5px 6px), repeating-linear-gradient(#fafafa 0 5px, #909090 5px 6px);
}

.rx {
  background: repeating-linear-gradient(45deg, transparent 0 3px, #a0a0a0 3px 4px);
}

.rwx {
  background: repeating-linear-gradient(45deg, transparent 0 3px, #a0a0a0 3px 4px), repeating-linear-gradient(-45deg, transparent 0 3px, #a0a0a0 3px 4px);
}

.none {
  background: #888;
}

.hdr {
  background: #f8f8d8;
}

.cod {
  background: #dcfcdc;
}

.dat {
  background: #ebebff;
}

.idx {
  background: #fbdcfb;
}

.rsc {
  background: #ffeccc;
}

.dbg {
  background: #cdebff;
}

.ovl {
  background: #ccffe9;
}

.high {
  background: #ffcccc;
}

.report {
  flex: 1;
  min-width: 0;
  margin-right: 13px;
}

.info {
  display: grid;
  grid-template-columns: 203px 1fr;
  padding: 2px 0 0 30px;
  white-space: nowrap;
}

.info dt {
  color: #8c8c8c;
}

.info .cat {
  grid-column: 1 / 3;
  margin-left: -18px;
}

.info mark {
  background: #f5f5d5;
  color: #222;
}

.heading {
  display: flex;
  gap: 4px;
  margin-top: 50px;
}

.heading h2 {
  flex: 1;
  height: 30px;
  padding-left: 21px;
  background: #e1efe1;
  border-radius: 12px 0 0 12px;
  font: bold 19px/30px "Liberation Sans", Arial, sans-serif;
}

.heading.yara {
  margin-top: 31px;
}

.heading.next {
  margin-top: 12px;
}

.capa {
  width: 172px;
  border: 1px solid #adadad;
  background: #e1e1e1;
  font: 15px/20px "Liberation Sans", Arial, sans-serif;
}

.capa svg {
  margin-right: 7px;
}

/* The card sits a little left of the middle of the report */
.card {
  width: 361px;
  height: 340px;
  margin: 13px auto 0;
  position: relative;
  left: -11px;
  border: 2px solid #baf2fe;
  border-bottom-width: 14px;
  border-radius: 28px 28px 14px 14px;
  box-shadow: 1px 1px 0 #c4c4c4;
}

.card h3 {
  height: 27px;
  background: #baf2fe;
  border-radius: 26px 26px 0 0;
  color: #226fae;
  font: bold 17px/25px "Liberation Mono", monospace;
  text-align: center;
}

.card h4 {
  padding: 7px 6px 5px;
  border-bottom: 2px solid #d3f3fa;
  font-weight: bold;
}

.card li {
  height: 36px;
  padding: 6px 7px 0 18px;
  display: flex;
  justify-content: space-between;
}

.level {
  width: 36px;
  height: 24px;
  background: #e6e6e6;
  border: 1px solid #d0d0d0;
  border-left: 0;
}

.level i {
  display: block;
  height: 100%;
  background: #06b025;
}

.anomalies {
  padding: 13px 0 0 12px;
  white-space: nowrap;
}

.anomalies a {
  display: inline-block;
  height: 19px;
  vertical-align: top;
}

.mid {
  background: #f0e8d0;
  color: #8f8340;
}

.note {
  background: #baf2fe;
  color: #226fae;
}

.bad {
  background: #f5dcdc;
  color: #ab4445;
}

.plain {
  background: #e1e1e1;
  color: #222;
}

/* Status bar */
.status {
  height: 30px;
  flex: none;
  display: flex;
  align-items: center;
  border: 1px solid #4a6e9a;
  border-top-color: #d8d8d8;
}

.selection {
  width: 442px;
  height: 100%;
  margin-left: auto;
  padding-left: 6px;
  display: flex;
  align-items: center;
  gap: 11px;
  border-left: 1px solid #d8d8d8;
  font-size: 16px;
  font-weight: bold;
}

.select {
  position: relative;
  height: 27px;
}

.select select {
  width: 100%;
  height: 100%;
  padding: 0 3px 5px;
  appearance: none;
  background: #e1e1e1;
  border: 1px solid #adadad;
  border-radius: 0;
  color: #000;
  font: inherit;
}

.select svg {
  position: absolute;
  right: 6px;
  top: 11px;
}

.type {
  width: 268px;
}

.cpu {
  width: 149px;
  margin-left: 13px;
}

.time {
  width: 126px;
  text-align: center;
}

.grip {
  align-self: flex-end;
  margin-left: 10px;
}

/* Things lying over the window */
.watermark {
  position: absolute;
  right: 24px;
  bottom: 28px;
  display: flex;
  align-items: center;
  gap: 9px;
  color: #fff;
  font: 56px/66px "Noto Sans CJK SC", sans-serif;
  filter: drop-shadow(1px 1px 2px rgba(0, 0, 0, .25));
}

.callouts {
  position: absolute;
  left: 0;
  top: 0;
  pointer-events: none;
}

.lines {
  fill: none;
  stroke: #f20f18;
  stroke-width: 3;
}

.notes {
  fill: #ee3b3b;
  stroke: #fafafa;
  stroke-width: 4;
  paint-order: stroke;
  font: bold 29px "Liberation Sans", Arial, sans-serif;
}
```
